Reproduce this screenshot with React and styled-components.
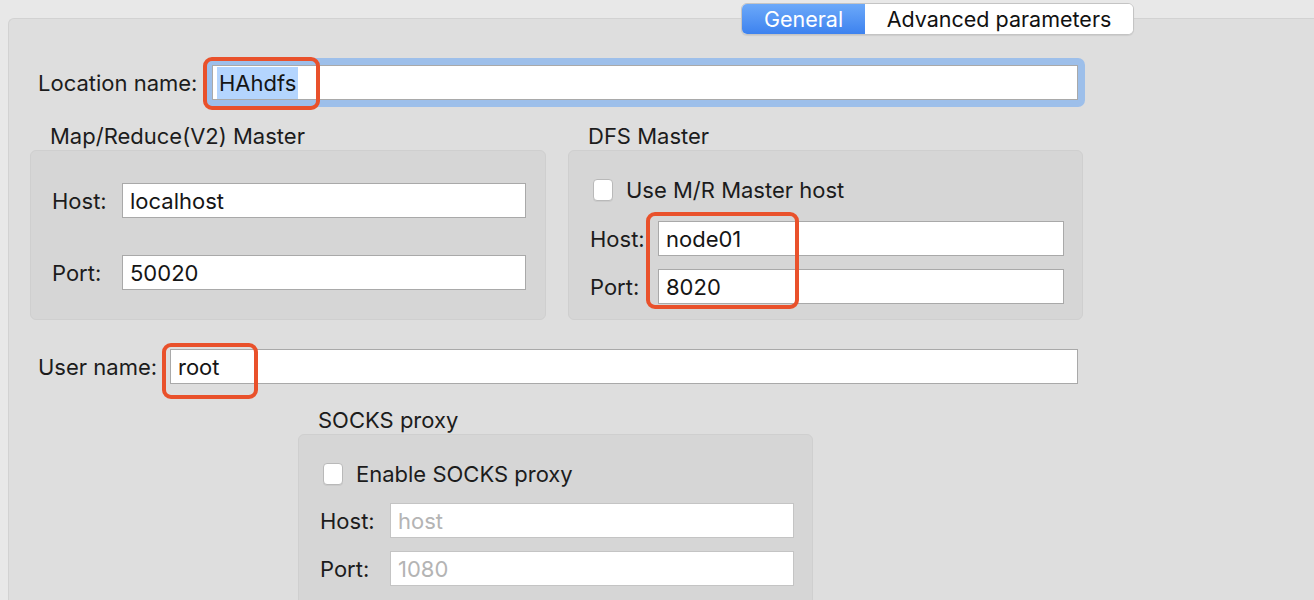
import React from 'react';
import styled, { createGlobalStyle } from 'styled-components';

const GlobalStyle = createGlobalStyle`
  * {
    margin: 0;
    padding: 0;
    box-sizing: border-box;
  }
  body {
    background: #e8e8e8;
    font-family: Inter, "Liberation Sans", Arial, sans-serif;
    color: #1c1c1c;
    overflow: hidden;
  }
`;

const Window = styled.div`
  position: relative;
  width: 1314px;
  height: 600px;
  overflow: hidden;
`;

/* segmented control sits over the panel's top edge */
const Tabs = styled.div`
  position: absolute;
  top: 3px;
  left: 741px;
  z-index: 2;
  display: flex;
  height: 32px;
  border: 1px solid #c4c4c4;
  border-radius: 6px;
  overflow: hidden;
  background: #fff;
  box-shadow: 0 1px 1px rgba(0, 0, 0, 0.08);
`;

const Tab = styled.div`
  display: flex;
  align-items: center;
  justify-content: center;
  width: ${(p) => p.$width}px;
  font-size: 21.5px;
  color: ${(p) => (p.$active ? '#fff' : '#111')};
  background: ${(p) => (p.$active ? 'linear-gradient(#6ca9f9, #3d82ef)' : '#fff')};
`;

const Panel = styled.div`
  margin: 18px 0 0 8px;
  height: 600px;
  background: #dedede;
  border: 1px solid #d2d2d2;
  border-right: none;
  border-radius: 6px 0 0 0;
  padding: 39px 0 0 21px;
`;

const Content = styled.div`
  width: 1055px;
  display: flex;
  flex-direction: column;
`;

const FormRow = styled.div`
  display: flex;
  align-items: center;
  padding: ${(p) => p.$pad || '0 0 0 8px'};
  margin-top: ${(p) => p.$top || 0}px;
`;

const Label = styled.div`
  flex: none;
  width: ${(p) => p.$width}px;
  font-size: 22px;
  line-height: 24px;
  white-space: nowrap;
`;

const FocusRing = styled.div`
  flex: 1;
  padding: 7px;
  border-radius: 7px;
  background: #9dbfea;
`;

const Field = styled.div`
  position: relative;
  flex: 1;
  display: flex;
`;

const TextBox = styled.div`
  flex: 1;
  height: 35px;
  display: flex;
  align-items: center;
  padding-left: 7px;
  background: #fff;
  border: 1px solid ${(p) => (p.$dim ? '#c4c4c4' : '#a9a9a9')};
  font-size: 22px;
  color: ${(p) => (p.$placeholder ? '#b4b4b4' : '#151515')};
  white-space: nowrap;
`;

const Selected = styled.span`
  background: #b4d5fe;
  padding: 3px 2px;
  margin-left: -3px;
`;

const Mark = styled.div`
  position: absolute;
  left: ${(p) => p.$x}px;
  top: ${(p) => p.$y}px;
  width: ${(p) => p.$w}px;
  height: ${(p) => p.$h}px;
  border: 4px solid #e9512b;
  border-radius: 9px;
  pointer-events: none;
  z-index: 1;
`;

const Groups = styled.div`
  display: flex;
  gap: 22px;
  margin-top: 17px;
`;

const Group = styled.div`
  display: flex;
  flex-direction: column;
  width: ${(p) => p.$width}px;
  margin-left: ${(p) => p.$left || 0}px;
  margin-top: ${(p) => p.$top || 0}px;
`;

const GroupTitle = styled.div`
  font-size: 22px;
  line-height: 24px;
  padding-left: 20px;
  margin-bottom: 2px;
`;

const GroupBox = styled.div`
  position: relative;
  height: ${(p) => p.$height}px;
  background: #d6d6d6;
  border: 1px solid #cfcfcf;
  border-radius: 6px;
  padding: ${(p) => p.$pad};
  display: flex;
  flex-direction: column;
`;

const BoxRow = styled.div`
  display: flex;
  align-items: center;
  margin-top: ${(p) => p.$top || 0}px;
`;

const CheckRow = styled.div`
  display: flex;
  align-items: center;
  gap: 13px;
  padding-left: 3px;
  font-size: 22px;
  line-height: 24px;
`;

const CheckBox = styled.div`
  width: 20px;
  height: 22px;
  background: #fff;
  border: 1px solid #b9b9b9;
  border-radius: 4px;
  box-shadow: 0 1px 0 rgba(0, 0, 0, 0.05);
`;

function HostPort({ labelWidth, host, port, dim, gap }) {
  return (
    <>
      <BoxRow>
        <Label $width={labelWidth}>Host:</Label>
        <TextBox $placeholder={dim} $dim={dim}>{host}</TextBox>
      </BoxRow>
      <BoxRow $top={gap}>
        <Label $width={labelWidth}>Port:</Label>
        <TextBox $placeholder={dim} $dim={dim}>{port}</TextBox>
      </BoxRow>
    </>
  );
}

export default function App() {
  return (
    <Window>
      <GlobalStyle />
      <Tabs>
        <Tab $active $width={123}>General</Tab>
        <Tab $width={268}>Advanced parameters</Tab>
      </Tabs>

      <Panel>
        <Content>
          <FormRow>
            <Label $width={167}>Location name:</Label>
            <FocusRing>
              <Field>
                <TextBox>
                  <Selected>HAhdfs</Selected>
                </TextBox>
                <Mark $x={-9} $y={-8} $w={117} $h={53} />
              </Field>
            </FocusRing>
          </FormRow>

          <Groups>
            <Group $width={516}>
              <GroupTitle>Map/Reduce(V2) Master</GroupTitle>
              <GroupBox $height={170} $pad="32px 19px 0 21px">
                <HostPort labelWidth={70} host="localhost" port="50020" gap={37} />
              </GroupBox>
            </Group>
            <Group $width={515}>
              <GroupTitle>DFS Master</GroupTitle>
              <GroupBox $height={170} $pad="27px 18px 0 21px">
                <CheckRow>
                  <CheckBox />
                  Use M/R Master host
                </CheckRow>
                <BoxRow $top={19}>
                  <Label $width={68}>Host:</Label>
                  <TextBox>node01</TextBox>
                </BoxRow>
                <BoxRow $top={13}>
                  <Label $width={68}>Port:</Label>
                  <TextBox>8020</TextBox>
                </BoxRow>
                <Mark $x={77} $y={61} $w={153} $h={97} />
              </GroupBox>
            </Group>
          </Groups>

          <FormRow $top={29} $pad="0 7px 0 8px">
            <Label $width={132}>User name:</Label>
            <Field>
              <TextBox>root</TextBox>
              <Mark $x={-8} $y={-6} $w={96} $h={56} />
            </Field>
          </FormRow>

          <Group $width={515} $left={268} $top={24}>
            <GroupTitle>SOCKS proxy</GroupTitle>
            <GroupBox $height={190} $pad="27px 18px 0 21px">
              <CheckRow>
                <CheckBox />
                Enable SOCKS proxy
              </CheckRow>
              <BoxRow $top={17}>
                <Label $width={70}>Host:</Label>
                <TextBox $placeholder $dim>host</TextBox>
              </BoxRow>
              <BoxRow $top={13}>
                <Label $width={70}>Port:</Label>
                <TextBox $placeholder $dim>1080</TextBox>
              </BoxRow>
            </GroupBox>
          </Group>
        </Content>
      </Panel>
    </Window>
  );
}
